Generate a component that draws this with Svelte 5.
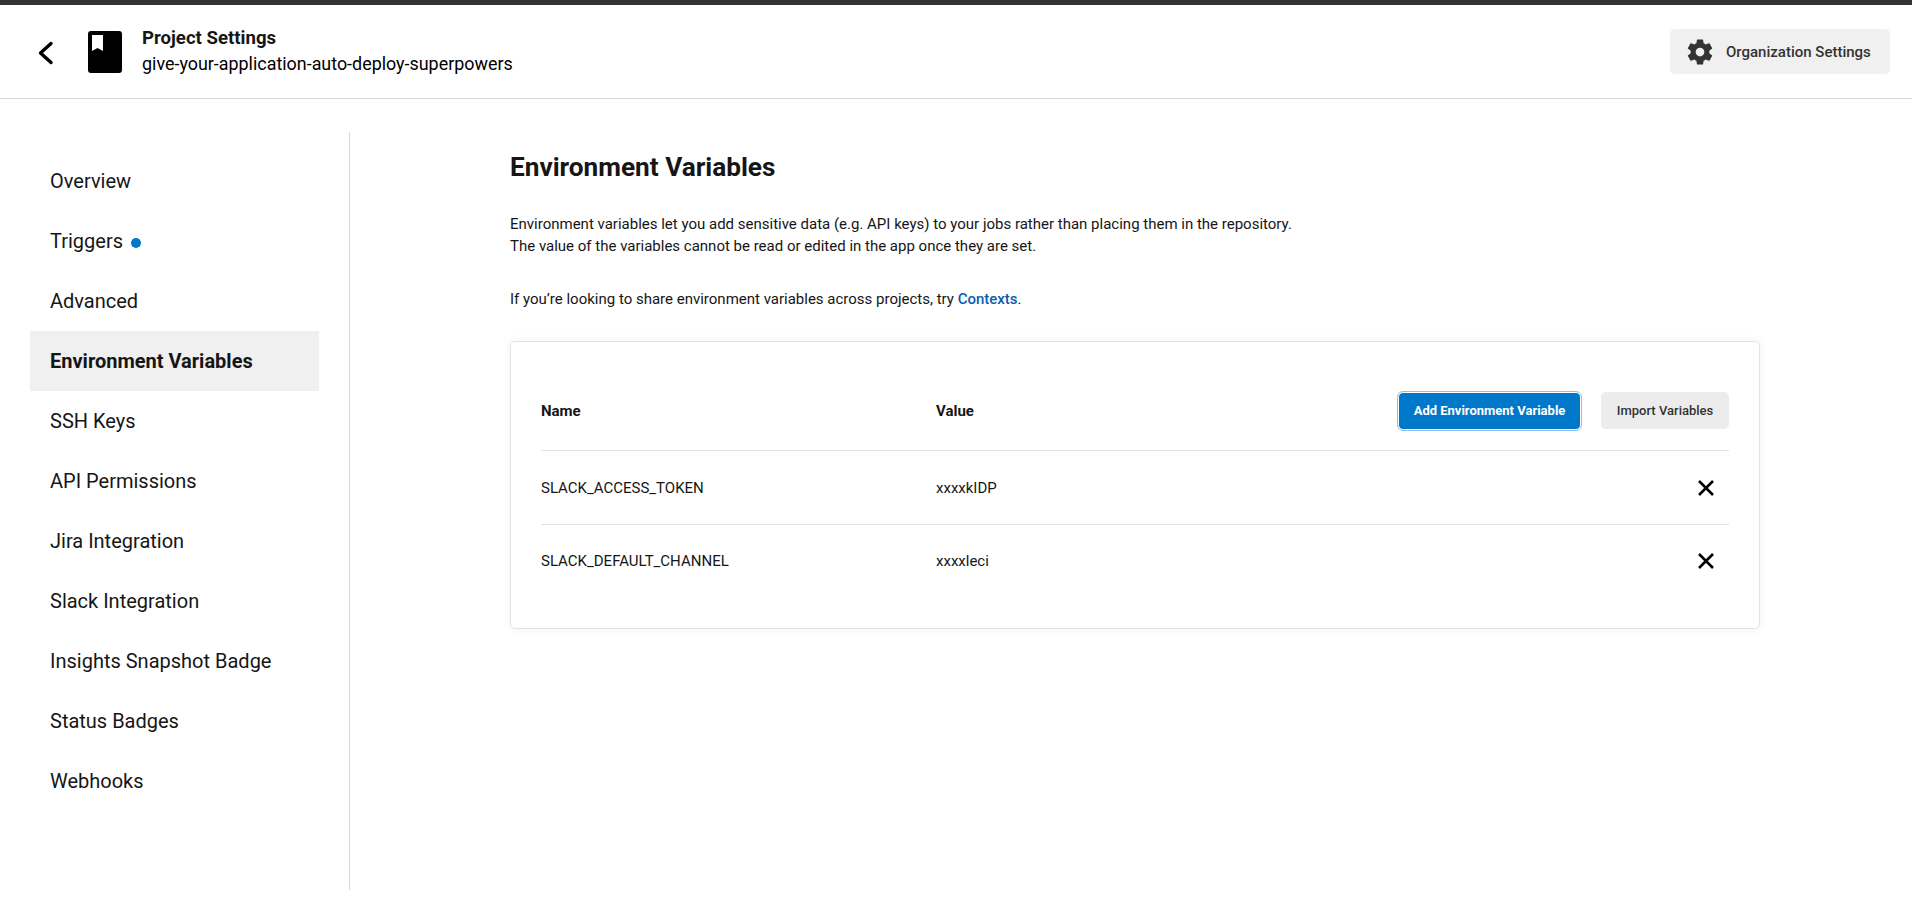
<script>
  const nav = ['Overview','Triggers','Advanced','Environment Variables','SSH Keys','API Permissions','Jira Integration','Slack Integration','Insights Snapshot Badge','Status Badges','Webhooks'];
  const rows = [
    { name: 'SLACK_ACCESS_TOKEN', value: 'xxxxkIDP' },
    { name: 'SLACK_DEFAULT_CHANNEL', value: 'xxxxleci' }
  ];
</script>

<div class="page">
  <header class="header">
    <div class="left">
      <svg class="back" width="18" height="24" viewBox="0 0 18 24"><path d="M15 2.5 4.5 12 15 21.5" fill="none" stroke="#000" stroke-width="3.4" stroke-linecap="round" stroke-linejoin="round"/></svg>
      <svg class="book" width="34" height="42" viewBox="0 0 34 42"><path fill-rule="evenodd" d="M3 0h28a3 3 0 0 1 3 3v36a3 3 0 0 1-3 3H3a3 3 0 0 1-3-3V3a3 3 0 0 1 3-3Zm1 4v16l5.5-3 5.5 3V4H4Z" fill="#000"/></svg>
      <div class="titles">
        <div class="t1">Project Settings</div>
        <div class="t2">give-your-application-auto-deploy-superpowers</div>
      </div>
    </div>
    <button class="org">
      <svg width="30" height="30" viewBox="0 0 24 24"><path fill="#333" d="M19.43 12.98c.04-.32.07-.64.07-.98s-.03-.66-.07-.98l2.11-1.65c.19-.15.24-.42.12-.64l-2-3.46c-.12-.22-.39-.3-.61-.22l-2.49 1c-.52-.4-1.08-.73-1.69-.98l-.38-2.65A.488.488 0 0 0 14 2h-4c-.25 0-.46.18-.49.42l-.38 2.65c-.61.25-1.17.59-1.69.98l-2.49-1c-.23-.09-.49 0-.61.22l-2 3.46c-.13.22-.07.49.12.64l2.11 1.65c-.04.32-.07.65-.07.98s.03.66.07.98l-2.11 1.65c-.19.15-.24.42-.12.64l2 3.46c.12.22.39.3.61.22l2.49-1c.52.4 1.08.73 1.69.98l.38 2.65c.03.24.24.42.49.42h4c.25 0 .46-.18.49-.42l.38-2.65c.61-.25 1.17-.59 1.69-.98l2.49 1c.23.09.49 0 .61-.22l2-3.46c.12-.22.07-.49-.12-.64l-2.11-1.65ZM12 15.5c-1.93 0-3.5-1.57-3.5-3.5s1.57-3.5 3.5-3.5 3.5 1.57 3.5 3.5-1.57 3.5-3.5 3.5Z"/></svg>
      <span>Organization Settings</span>
    </button>
  </header>

  <div class="body">
    <aside class="side">
      <nav class="nav">
        {#each nav as item}
          <div class="item" class:active={item === 'Environment Variables'}>
            {item}{#if item === 'Triggers'}<span class="dot"></span>{/if}
          </div>
        {/each}
      </nav>
    </aside>
    <main class="main">
      <h1>Environment Variables</h1>
      <p class="desc">Environment variables let you add sensitive data (e.g. API keys) to your jobs rather than placing them in the repository.<br>The value of the variables cannot be read or edited in the app once they are set.</p>
      <p class="share">If you’re looking to share environment variables across projects, try <a href="#contexts">Contexts</a>.</p>
      <section class="card">
        <div class="row head">
          <div class="c-name">Name</div>
          <div class="c-value">Value</div>
          <div class="actions">
            <button class="primary">Add Environment Variable</button>
            <button class="secondary">Import Variables</button>
          </div>
        </div>
        {#each rows as r}
          <div class="row data">
            <div class="c-name">{r.name}</div>
            <div class="c-value">{r.value}</div>
            <svg class="x" width="18" height="18" viewBox="0 0 18 18"><path d="M2 2l14 14M16 2 2 16" stroke="#000" stroke-width="2.6" fill="none"/></svg>
          </div>
        {/each}
      </section>
    </main>
  </div>
</div>

<style>
  :global(body) { margin: 0; background: #fff; }
  .page { font-family: Roboto, "Liberation Sans", sans-serif; color: #161616; height: 911px; overflow: hidden; }
  .header { box-sizing: border-box; height: 99px; border-top: 5px solid #333; border-bottom: 1px solid #d8d8d8; display: flex; align-items: center; justify-content: space-between; padding: 0 22px 0 36px; }
  .left { display: flex; align-items: center; }
  .back { margin-right: 34px; margin-top: 2px; }
  .book { margin-right: 20px; margin-top: 1px; }
  .titles { display: flex; flex-direction: column; margin-top: -1px; }
  .t1 { font-size: 18.6px; font-weight: 700; line-height: 26px; color: #161616; }
  .t2 { font-size: 17.9px; line-height: 26px; color: #000; }
  .org { box-sizing: border-box; width: 220px; height: 45px; border: 0; border-radius: 5px; background: #f0f0f0; display: flex; align-items: center; padding: 0 0 0 15px; font: 500 15px Roboto, sans-serif; color: #333; gap: 11px; }
  .body { display: flex; padding-top: 33px; }
  .side { box-sizing: border-box; width: 350px; height: 758px; border-right: 1px solid #d8d8d8; padding: 19px 0 0 30px; flex: none; }
  .nav { width: 289px; }
  .item { height: 60px; display: flex; align-items: center; padding-left: 20px; font-size: 20px; color: #161616; }
  .item.active { background: #f0f0f0; font-weight: 700; }
  .dot { width: 10px; height: 10px; border-radius: 50%; background: #0078ca; margin: 4px 0 0 8px; }
  .main { padding: 0 0 0 160px; width: 1250px; flex: none; }
  h1 { margin: 20px 0 0; font-size: 26.2px; line-height: 30px; font-weight: 700; color: #161616; }
  p { margin: 0; font-size: 15px; line-height: 22px; color: #161616; }
  .desc { margin-top: 31px; }
  .share { margin-top: 31px; }
  a { color: #0b5cad; font-weight: 500; text-decoration: none; }
  .card { box-sizing: border-box; margin-top: 31px; height: 288px; border: 1px solid #e3e3e3; border-radius: 5px; box-shadow: 0 0 10px rgba(0,0,0,.06); padding: 29px 30px 0; }
  .row { display: flex; align-items: center; font-size: 15px; }
  .head { height: 79px; border-bottom: 1px solid #e3e3e3; font-weight: 700; }
  .data { height: 73px; border-bottom: 1px solid #e3e3e3; position: relative; }
  .data:last-child { border-bottom: 0; height: 71px; }
  .c-name { width: 395px; flex: none; }
  .c-value { flex: 1; }
  .actions { display: flex; gap: 20px; align-items: center; }
  button { cursor: pointer; }
  .primary { box-sizing: border-box; width: 183px; height: 38px; border: 1px solid #fff; outline: 1px solid #8dbfe8; border-radius: 5px; background: #0078ca; color: #fff; font: 700 13px Roboto, sans-serif; padding: 0; }
  .secondary { box-sizing: border-box; width: 128px; height: 37px; border: 0; border-radius: 5px; background: #ececec; color: #333; font: 500 13px Roboto, sans-serif; padding: 0; }
  .x { margin-right: 14px; }
</style>
